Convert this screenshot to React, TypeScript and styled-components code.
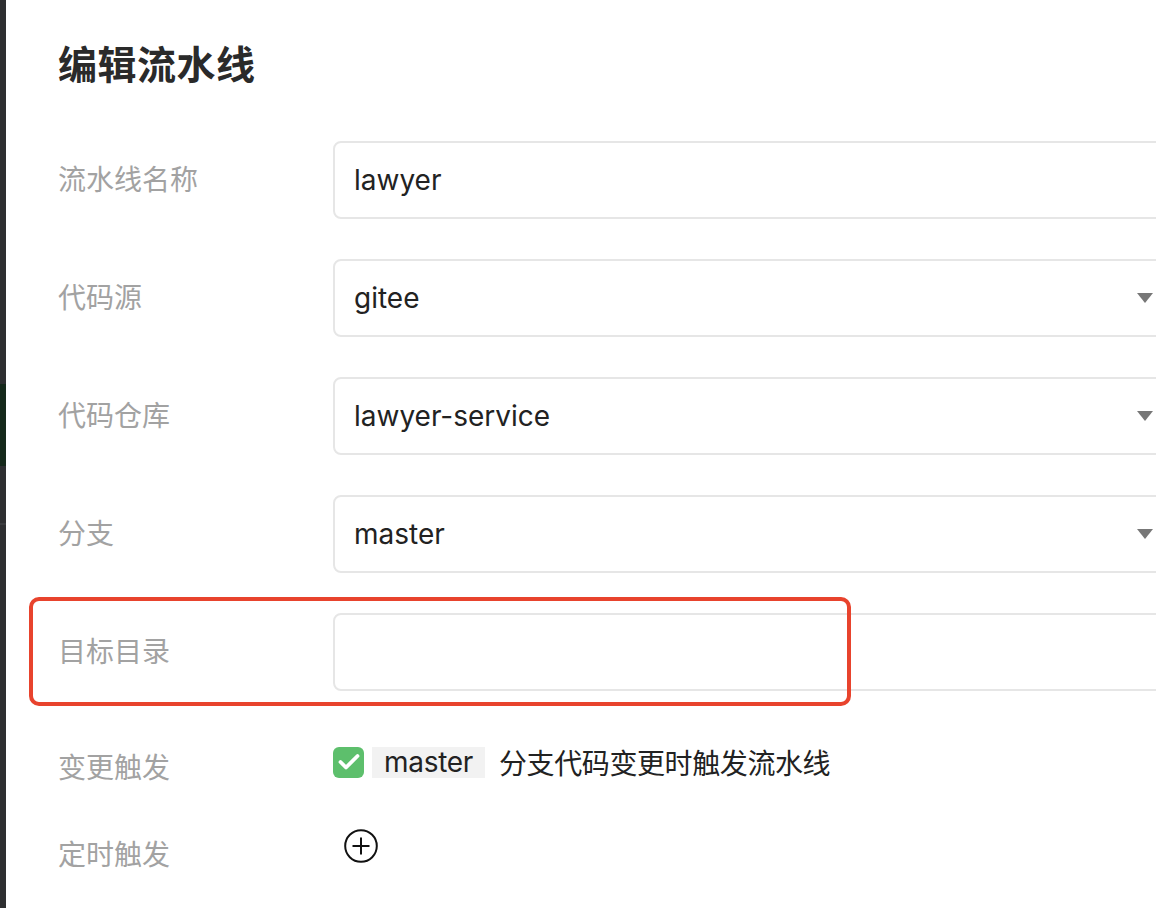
import React from "react";
import styled, { createGlobalStyle } from "styled-components";

const GlobalStyle = createGlobalStyle`
    html, body {
        margin: 0;
        padding: 0;
        background: #fff;
        overflow: hidden;
    }
    body {
        font-family: "Inter", "Noto Sans CJK SC", "Noto Sans", sans-serif;
        -webkit-font-smoothing: antialiased;
    }
`;

const fields = [
    { label: "流水线名称", value: "lawyer", select: false },
    { label: "代码源", value: "gitee", select: true },
    { label: "代码仓库", value: "lawyer-service", select: true },
    { label: "分支", value: "master", select: true },
    { label: "目标目录", value: "", select: false, highlight: true },
];

const App = () => {
    return (
        <Screen>
            <GlobalStyle />
            {/* page behind the modal, only a sliver shows */}
            <Backdrop>
                <GreenPatch />
                <BackdropLine />
            </Backdrop>

            <Dialog>
                <Title>编辑流水线</Title>
                <Form>
                    {fields.map(f => (
                        <FieldRow key={f.label} $highlight={!!f.highlight}>
                            <Label>{f.label}</Label>
                            {f.select ? (
                                <SelectBox>
                                    <span>{f.value}</span>
                                    <Caret />
                                </SelectBox>
                            ) : (
                                <TextInput defaultValue={f.value} />
                            )}
                        </FieldRow>
                    ))}

                    <TriggerRow $extra={12}>
                        <Label $drop={6}>变更触发</Label>
                        <Control>
                            <Checkbox>
                                <svg width="24" height="20" viewBox="0 0 24 20">
                                    <polyline points="3.5,10 9,15.5 20.5,4" fill="none" stroke="#fff" strokeWidth="3.8" strokeLinecap="round" strokeLinejoin="round" />
                                </svg>
                            </Checkbox>
                            <Chip>master</Chip>
                            <Hint>分支代码变更时触发流水线</Hint>
                        </Control>
                    </TriggerRow>

                    <TriggerRow $extra={0}>
                        <Label $drop={9}>定时触发</Label>
                        <Control>
                            <AddButton aria-label="add">
                                <svg width="34" height="34" viewBox="0 0 34 34">
                                    <circle cx="17" cy="17" r="15.8" fill="none" stroke="#111" strokeWidth="2" />
                                    <line x1="8.5" y1="17" x2="25.5" y2="17" stroke="#111" strokeWidth="2" />
                                    <line x1="17" y1="8.5" x2="17" y2="25.5" stroke="#111" strokeWidth="2" />
                                </svg>
                            </AddButton>
                        </Control>
                    </TriggerRow>
                </Form>
            </Dialog>
        </Screen>
    );
};

export default App;

const Screen = styled.div`
    display: flex;
    width: 1156px;
    height: 908px;
    overflow: hidden;
    background: #fff;
`;

const Backdrop = styled.div`
    width: 6px;
    flex-shrink: 0;
    background: #2e2f31;
    display: flex;
    flex-direction: column;
`;

const GreenPatch = styled.div`
    margin-top: 384px;
    height: 82px;
    background: #15291b;
`;

const BackdropLine = styled.div`
    margin-top: 57px;
    height: 2px;
    background: #3b3c3f;
`;

const Dialog = styled.div`
    flex: 1;
    padding: 39px 0 0 52px;
    min-width: 0;
`;

const Title = styled.h1`
    margin: 0;
    font-size: 39px;
    line-height: 52px;
    font-weight: 700;
    color: #2a2a2a;
    letter-spacing: 0.5px;
`;

const Form = styled.div`
    margin-top: 50px;
    display: flex;
    flex-direction: column;
    gap: 40px;
`;

const FieldRow = styled.div<{ $highlight: boolean }>`
    position: relative;
    display: grid;
    grid-template-columns: 275px 840px;
    align-items: center;
    height: 78px;

    ${p => p.$highlight && `
        &::after {
            content: "";
            position: absolute;
            left: -29px;
            top: -16px;
            width: 822px;
            height: 109px;
            box-sizing: border-box;
            border: 4px solid #e8432d;
            border-radius: 10px;
            pointer-events: none;
        }
    `}
`;

const TriggerRow = styled.div<{ $extra: number }>`
    display: grid;
    grid-template-columns: 275px 1fr;
    align-items: start;
    margin-top: ${p => p.$extra}px;
`;

const Label = styled.div<{ $drop?: number }>`
    font-size: 28px;
    line-height: 38px;
    color: #a2a2a2;
    padding-top: ${p => p.$drop || 0}px;
`;

const boxBase = `
    box-sizing: border-box;
    width: 840px;
    height: 78px;
    border: 2px solid #e6e6e6;
    border-radius: 8px;
    background: #fff;
    font-size: 28px;
    color: #222;
    font-family: "Inter", "Noto Sans CJK SC", sans-serif;
`;

const TextInput = styled.input`
    ${boxBase}
    padding: 0 19px;
    outline: none;
`;

const SelectBox = styled.div`
    ${boxBase}
    display: flex;
    align-items: center;
    justify-content: space-between;
    padding: 0 18px 0 19px;
`;

const Caret = styled.span`
    width: 0;
    height: 0;
    border-left: 8px solid transparent;
    border-right: 8px solid transparent;
    border-top: 10px solid #777;
`;

const Control = styled.div`
    display: flex;
    align-items: center;
    height: 38px;
`;

const Checkbox = styled.span`
    width: 31px;
    height: 31px;
    border-radius: 6px;
    background: #5dbf6c;
    display: inline-flex;
    align-items: center;
    justify-content: center;
`;

const Chip = styled.span`
    margin-left: 8px;
    padding: 0 12px;
    height: 31px;
    line-height: 31px;
    background: #f2f2f2;
    font-size: 28px;
    color: #222;
    letter-spacing: -0.3px;
`;

const Hint = styled.span`
    margin-left: 14px;
    font-size: 28px;
    color: #222;
    letter-spacing: -0.4px;
`;

const AddButton = styled.button`
    margin-left: 11px;
    padding: 0;
    border: none;
    background: none;
    display: inline-flex;
    cursor: pointer;
`;
